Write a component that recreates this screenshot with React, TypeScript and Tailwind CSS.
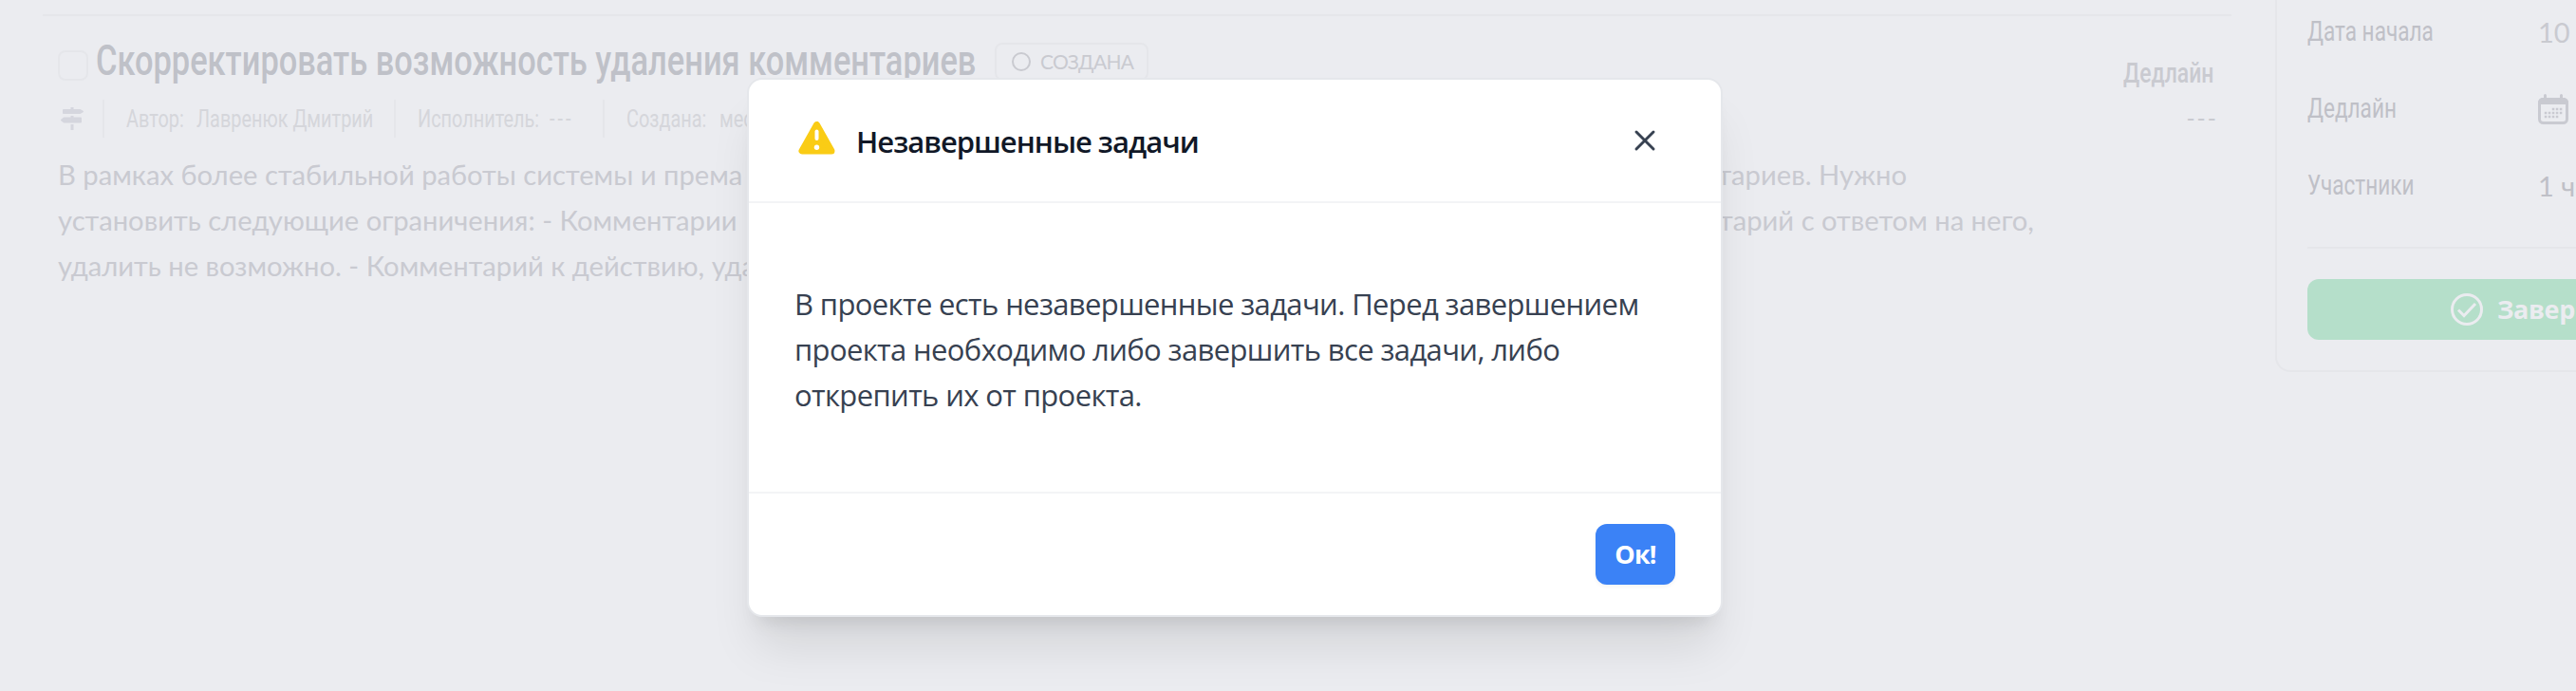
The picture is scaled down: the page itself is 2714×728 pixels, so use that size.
import React from "react";
import { X } from "lucide-react";

type CondensedProps = {
  children: React.ReactNode;
  className: string;
};

// Box keeps the final width, the inner text is squeezed to fit it
const Condensed: React.FC<CondensedProps> = ({ children, className }) => (
  <div className={`shrink-0 whitespace-nowrap font-['Roboto',sans-serif] ${className}`}>
    <span className="inline-block origin-left scale-x-[0.765]">{children}</span>
  </div>
);

const Calendar: React.FC = () => (
  <svg className="h-8 w-8 shrink-0" viewBox="0 0 32 32" fill="none">
    <path d="M7.500 1.500v5M24.500 1.500v5" stroke="#c9cad1" strokeWidth="3" strokeLinecap="round" />
    <rect x="1.500" y="5.500" width="29" height="25" rx="4" stroke="#c9cad1" strokeWidth="3" />
    <path d="M0 11V9a5 5 0 0 1 5-5h22a5 5 0 0 1 5 5v2z" fill="#c9cad1" />
    <path
      d="M14.800 16h11M6.800 20h19M6.800 24h15"
      stroke="#c9cad1"
      strokeWidth="2.500"
      strokeDasharray="2.500 1.500"
    />
  </svg>
);

const TaskCard: React.FC = () => (
  <div className="ml-[45px] w-[2306px] shrink-0 pt-[15px]">
    <div className="h-0.5 bg-[#e5e6ea]" />
    <div className="flex h-[88px] pl-4">
      <div className="mt-9 h-8 w-8 rounded-lg border-2 border-[#e5e6ea]" />
      <Condensed className="ml-2 mt-[17px] w-[947px] text-[45px] leading-[60px] font-medium text-[#bfc1c8]">
        Скорректировать возможность удаления комментариев
      </Condensed>
      <div className="mt-7 flex h-10 w-[162px] items-center rounded-lg border-2 border-[#e5e6ea] pl-4 font-['Lato',sans-serif] text-[21px] tracking-[-0.7px] text-[#c9cad0]">
        <span className="mr-[10px] h-5 w-5 rounded-full border-2 border-[#c9cad0]" />
        СОЗДАНА
      </div>
      <Condensed className="ml-auto mr-[17px] mt-[40px] w-[97px] text-[30px] leading-[40px] font-medium text-[#c9cad0]">
        Дедлайн
      </Condensed>
    </div>
    <div className="flex h-10 items-center pl-[19px] text-[26px] text-[#d5d6db]">
      <svg
        className="h-6 w-6"
        viewBox="0 0 24 24"
        fill="#d5d6de"
        stroke="#d5d6de"
        strokeWidth="2"
        strokeLinejoin="round"
      >
        <path d="M3 3h17.500L23 4.500 20.500 6H3zM21 11.500v4H3.500L1 13.500l2.500-2z" />
        <path d="M10.500 0h3v2h-3zM10.500 9h3v2h-3zM10.500 18h3v6h-3z" stroke="none" />
      </svg>
      <div className="ml-5 h-10 w-0.5 bg-[#e5e6ea]" />
      <Condensed className="ml-[23px] w-[74px]">Автор:</Condensed>
      <Condensed className="w-[208px]">Лавренюк Дмитрий</Condensed>
      <div className="h-10 w-0.5 bg-[#e5e6ea]" />
      <Condensed className="ml-[23px] w-[139px]">Исполнитель:</Condensed>
      <Condensed className="w-[56px] tracking-[4px]">---</Condensed>
      <div className="h-10 w-0.5 bg-[#e5e6ea]" />
      <Condensed className="ml-[23px] w-[98px]">Создана:</Condensed>
      <Condensed className="w-[98px]">месяц назад</Condensed>
      <div className="ml-auto mr-[13px] font-['Roboto',sans-serif] tracking-[4px] text-[#c9cad0]">
        ---
      </div>
    </div>
    <div className="ml-4 mt-[15px] font-['Lato',sans-serif] text-[29.2px] leading-[48px] whitespace-nowrap text-[#c9cad1]">
      <div className="flex w-[1948px] justify-between">
        <span>В рамках более стабильной работы системы и према</span>
        <span>комментариев. Нужно</span>
      </div>
      <div className="flex w-[2082px] justify-between">
        <span>установить следующие ограничения: - Комментарии</span>
        <span>Комментарий с ответом на него,</span>
      </div>
      <div>удалить не возможно. - Комментарий к действию, удалить</div>
    </div>
  </div>
);

const ProjectPanel: React.FC = () => (
  <div className="ml-[46px] flex h-[392px] w-[400px] shrink-0 flex-col rounded-bl-2xl border-b-2 border-l-2 border-[#e5e6ea] pl-8">
    <div className="-mt-[7px] flex h-[81px] items-center text-[#bfc0c7]">
      <Condensed className="w-[243px] text-[29.5px]">Дата начала</Condensed>
      <span className="font-['Lato',sans-serif] text-[29px] whitespace-nowrap text-[#c9cad0]">10 </span>
    </div>
    <div className="flex h-[81px] items-center text-[#bfc0c7]">
      <Condensed className="w-[243px] text-[29.5px]">Дедлайн</Condensed>
      <Calendar />
    </div>
    <div className="flex h-[81px] items-center text-[#bfc0c7]">
      <Condensed className="w-[243px] text-[29.5px]">Участники</Condensed>
      <span className="font-['Lato',sans-serif] text-[29px] whitespace-nowrap">1 че</span>
    </div>
    <div className="mt-6 h-0.5 bg-[#e5e6ea]" />
    <div className="mt-8 flex h-16 items-center rounded-l-xl bg-[#b5dfca] pl-[151px] font-['Open_Sans',sans-serif] text-[27px] font-bold tracking-[-0.4px] text-[#ebecf0]">
      <svg
        className="mr-[15px] h-[34px] w-[34px] shrink-0"
        viewBox="0 0 34 34"
        fill="none"
        stroke="#ebecf0"
        strokeWidth="3"
      >
        <circle cx="17" cy="17" r="15.500" />
        <path d="M8 17.500l6 6L26 11" />
      </svg>
      Завершить
    </div>
  </div>
);

const Modal: React.FC = () => (
  <div className="absolute left-[787px] top-[82px] flex h-[568px] w-[1028px] flex-col rounded-2xl border-2 border-gray-200 bg-white font-['Open_Sans',sans-serif] shadow-[0_40px_50px_-10px_rgba(0,0,0,0.1),0_16px_20px_-12px_rgba(0,0,0,0.1)]">
    <div className="flex h-[130px] items-center border-b-2 border-[#f3f4f6] pl-[52px] pr-[62px]">
      <svg className="mb-[5px] h-[35px] w-[39px]" viewBox="0 0 39 35">
        <path
          d="M19.500 3.500L4 31h31z"
          fill="#facc15"
          stroke="#facc15"
          strokeWidth="7"
          strokeLinejoin="round"
        />
        <path d="M19.500 10.500v7.500" stroke="#fff" strokeWidth="4" strokeLinecap="round" />
        <circle cx="19.500" cy="27.300" r="2.700" fill="#fff" />
      </svg>
      <h2 className="ml-[22px] pt-0.5 text-[31px] font-semibold tracking-[-1px] whitespace-nowrap text-[#111827]">
        Незавершенные задачи
      </h2>
      <X className="ml-auto text-[#374151]" size={36} strokeWidth={2} />
    </div>
    <p className="flex-1 pl-12 pt-[82px] text-[31px] leading-[48px] tracking-[-0.63px] whitespace-nowrap text-[#374151]">
      В проекте есть незавершенные задачи. Перед завершением
      <br />
      проекта необходимо либо завершить все задачи, либо
      <br />
      открепить их от проекта.
    </p>
    <div className="flex h-[130px] items-center justify-end border-t-2 border-[#f3f4f6] pr-12">
      <button className="h-16 w-[84px] rounded-xl bg-[#3b82f6] text-[27px] font-bold tracking-[-0.8px] text-white shadow-[0_2px_4px_rgba(0,0,0,0.05)]">
        Ок!
      </button>
    </div>
  </div>
);

const App: React.FC = () => {
  return (
    <div className="relative flex h-[728px] w-[2714px] items-start overflow-hidden bg-[#ebecf0]">
      <TaskCard />
      <ProjectPanel />
      <Modal />
    </div>
  );
};

export default App;
